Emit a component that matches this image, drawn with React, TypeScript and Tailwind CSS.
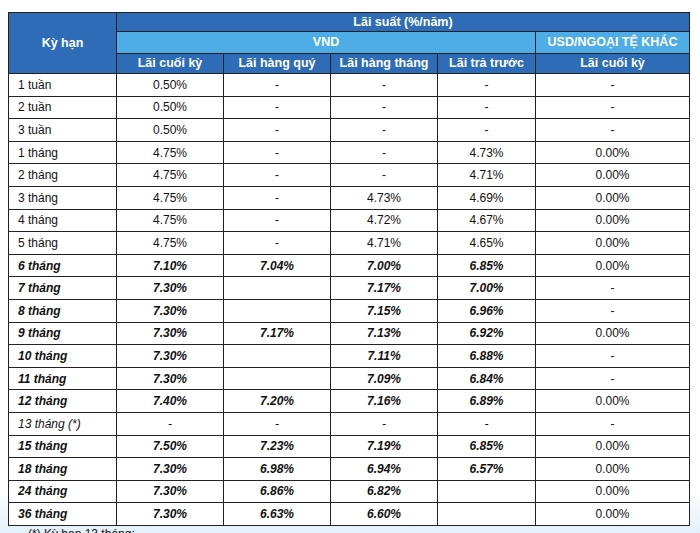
import React from 'react';

type Row = {
  term: string;
  cells: string[];
  usd: string;
  style: 'normal' | 'bold' | 'italic';
};

const rows: Row[] = [
  { term: '1 tuần', cells: ['0.50%', '-', '-', '-'], usd: '-', style: 'normal' },
  { term: '2 tuần', cells: ['0.50%', '-', '-', '-'], usd: '-', style: 'normal' },
  { term: '3 tuần', cells: ['0.50%', '-', '-', '-'], usd: '-', style: 'normal' },
  { term: '1 tháng', cells: ['4.75%', '-', '-', '4.73%'], usd: '0.00%', style: 'normal' },
  { term: '2 tháng', cells: ['4.75%', '-', '-', '4.71%'], usd: '0.00%', style: 'normal' },
  { term: '3 tháng', cells: ['4.75%', '-', '4.73%', '4.69%'], usd: '0.00%', style: 'normal' },
  { term: '4 tháng', cells: ['4.75%', '-', '4.72%', '4.67%'], usd: '0.00%', style: 'normal' },
  { term: '5 tháng', cells: ['4.75%', '-', '4.71%', '4.65%'], usd: '0.00%', style: 'normal' },
  { term: '6 tháng', cells: ['7.10%', '7.04%', '7.00%', '6.85%'], usd: '0.00%', style: 'bold' },
  { term: '7 tháng', cells: ['7.30%', '', '7.17%', '7.00%'], usd: '-', style: 'bold' },
  { term: '8 tháng', cells: ['7.30%', '', '7.15%', '6.96%'], usd: '-', style: 'bold' },
  { term: '9 tháng', cells: ['7.30%', '7.17%', '7.13%', '6.92%'], usd: '0.00%', style: 'bold' },
  { term: '10 tháng', cells: ['7.30%', '', '7.11%', '6.88%'], usd: '-', style: 'bold' },
  { term: '11 tháng', cells: ['7.30%', '', '7.09%', '6.84%'], usd: '-', style: 'bold' },
  { term: '12 tháng', cells: ['7.40%', '7.20%', '7.16%', '6.89%'], usd: '0.00%', style: 'bold' },
  { term: '13 tháng (*)', cells: ['-', '-', '-', '-'], usd: '-', style: 'italic' },
  { term: '15 tháng', cells: ['7.50%', '7.23%', '7.19%', '6.85%'], usd: '0.00%', style: 'bold' },
  { term: '18 tháng', cells: ['7.30%', '6.98%', '6.94%', '6.57%'], usd: '0.00%', style: 'bold' },
  { term: '24 tháng', cells: ['7.30%', '6.86%', '6.82%', ''], usd: '0.00%', style: 'bold' },
  { term: '36 tháng', cells: ['7.30%', '6.63%', '6.60%', ''], usd: '0.00%', style: 'bold' },
];

const styleClass = {
  normal: '',
  bold: 'italic font-bold',
  italic: 'italic',
};

export default function App() {
  return (
    <div
      className="relative h-[533px] w-[700px] overflow-hidden bg-white text-[#111]"
      style={{ fontFamily: '"Liberation Sans", Arial, sans-serif' }}
    >
      {/* light blue backdrop at the bottom */}
      <div className="absolute inset-x-0 bottom-0 h-[40px] bg-gradient-to-b from-white via-[#eef6fc] to-[#e3f0fa]" />

      <div className="relative pl-[8px] pt-[12px]">
        <table className="border-collapse border border-[#222] bg-white text-[12px] leading-none">
          <colgroup>
            <col className="w-[108px]" />
            <col className="w-[107px]" />
            <col className="w-[107px]" />
            <col className="w-[107px]" />
            <col className="w-[98px]" />
            <col className="w-[154px]" />
          </colgroup>
          <thead className="font-bold text-white">
            <tr className="h-[19px] bg-[#2e6cb8]">
              <th rowSpan={3} className="border border-[#222] bg-[#2e6cb8] text-[12.5px] font-bold">
                Kỳ hạn
              </th>
              <th colSpan={5} className="border border-[#222] text-[12.5px] font-bold">
                Lãi suất (%/năm)
              </th>
            </tr>
            <tr className="h-[22px] bg-[#4eace7]">
              <th colSpan={4} className="border border-[#222] text-[12.5px] font-bold">
                VND
              </th>
              <th className="border border-[#222] text-[12.5px] font-bold">USD/NGOẠI TỆ KHÁC</th>
            </tr>
            <tr className="h-[20px] bg-[#2e6cb8]">
              <th className="border border-[#222] text-[12.5px] font-bold">Lãi cuối kỳ</th>
              <th className="border border-[#222] text-[12.5px] font-bold">Lãi hàng quý</th>
              <th className="border border-[#222] text-[12.5px] font-bold">Lãi hàng tháng</th>
              <th className="border border-[#222] text-[12.5px] font-bold">Lãi trả trước</th>
              <th className="border border-[#222] text-[12.5px] font-bold">Lãi cuối kỳ</th>
            </tr>
          </thead>
          <tbody>
            {rows.map((r) => (
              <tr key={r.term} className="h-[22.6px] bg-white">
                <td className={`border border-[#222] pl-[9px] text-left ${styleClass[r.style]}`}>
                  {r.term}
                </td>
                {r.cells.map((c, i) => (
                  <td key={i} className={`border border-[#222] text-center ${styleClass[r.style]}`}>
                    {c}
                  </td>
                ))}
                <td className="border border-[#222] text-center">{r.usd}</td>
              </tr>
            ))}
          </tbody>
        </table>
        <div className="pl-[20px] pt-[1px] text-[12px] leading-[14px]">(*) Kỳ hạn 13 tháng:</div>
      </div>
    </div>
  );
}
